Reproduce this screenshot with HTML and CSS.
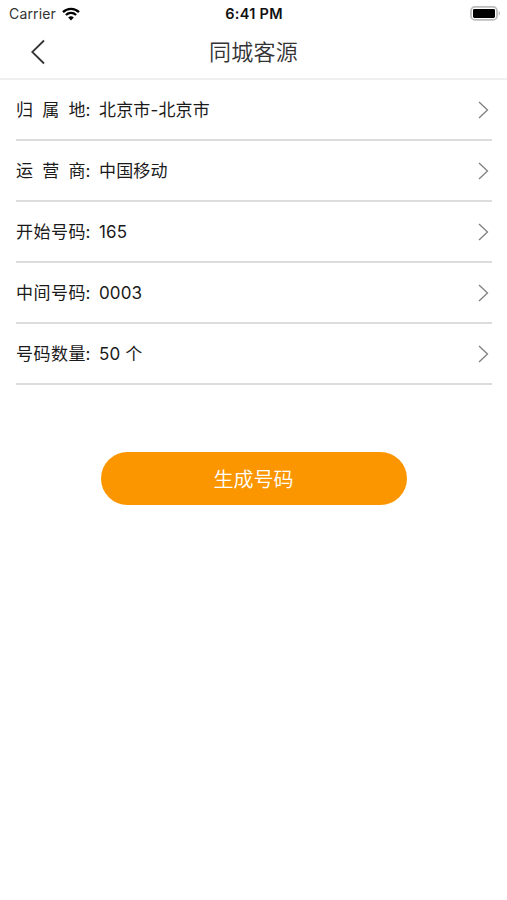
FILE: index.html
```html
<!DOCTYPE html>
<html lang="zh-CN">
<head>
    <meta charset="UTF-8">
    <meta name="viewport" content="width=device-width, initial-scale=1.0">
    <title>同城客源</title>
    <link rel="stylesheet" href="styles.css">
</head>
<body>
    <div class="status-bar">
        <div class="carrier">
            <span>Carrier</span>
            <svg class="wifi" width="18" height="14" viewBox="0 0 18 14">
                <path d="M1 5.1a11.5 11.5 0 0 1 16 0M3.9 8a7.3 7.3 0 0 1 10.2 0" fill="none" stroke="#000" stroke-width="2.3"/>
                <path d="M9 13.4L6.2 10.6a4 4 0 0 1 5.6 0z"/>
            </svg>
        </div>
        <div class="time">6:41 PM</div>
        <svg class="battery" width="31" height="15" viewBox="0 0 31 15">
            <rect x="1" y="0.9" width="26" height="13" rx="4" fill="#fff" stroke="#bcbcbc" stroke-width="1.8"/>
            <rect x="3" y="2.9" width="22" height="9" rx="1.4"/>
            <path d="M28.6 5.2c1.9.6 1.9 3.8 0 4.4z" fill="#bcbcbc"/>
        </svg>
    </div>

    <header class="nav-bar">
        <a class="back" href="#" aria-label="返回">
            <svg width="14" height="26" viewBox="0 0 14 26">
                <path d="M13 1.5L1.2 13 13 24.5" fill="none" stroke="#333" stroke-width="1.8"/>
            </svg>
        </a>
        <h1 class="title">同城客源</h1>
    </header>

    <main>
        <ul class="list">
            <li class="row">
                <span class="label"><span class="spread"><i>归</i><i>属</i><i>地</i></span>:</span>
                <span class="value">北京市-北京市</span>
                <svg class="arrow" viewBox="0 0 11 18"><path d="M1 1l8.5 8L1 17"/></svg>
            </li>
            <li class="row">
                <span class="label"><span class="spread"><i>运</i><i>营</i><i>商</i></span>:</span>
                <span class="value">中国移动</span>
                <svg class="arrow" viewBox="0 0 11 18"><path d="M1 1l8.5 8L1 17"/></svg>
            </li>
            <li class="row">
                <span class="label"><span class="spread"><i>开</i><i>始</i><i>号</i><i>码</i></span>:</span>
                <span class="value">165</span>
                <svg class="arrow" viewBox="0 0 11 18"><path d="M1 1l8.5 8L1 17"/></svg>
            </li>
            <li class="row">
                <span class="label"><span class="spread"><i>中</i><i>间</i><i>号</i><i>码</i></span>:</span>
                <span class="value">0003</span>
                <svg class="arrow" viewBox="0 0 11 18"><path d="M1 1l8.5 8L1 17"/></svg>
            </li>
            <li class="row">
                <span class="label"><span class="spread"><i>号</i><i>码</i><i>数</i><i>量</i></span>:</span>
                <span class="value">50 个</span>
                <svg class="arrow" viewBox="0 0 11 18"><path d="M1 1l8.5 8L1 17"/></svg>
            </li>
        </ul>
        <button class="submit" type="button">生成号码</button>
    </main>
</body>
</html>
```
FILE: styles.css
```css
:root {
    --primary-color: #fb9600;
    --text-color: #1a1a1a;
    --line-color: #dcdcdc;
}

* {
    box-sizing: border-box;
}

body {
    margin: 0;
    min-height: 100vh;
    background-color: #fff;
    color: var(--text-color);
    font-family: Inter, "Noto Sans CJK SC", sans-serif;
}

.status-bar {
    display: grid;
    grid-template-columns: 1fr auto 1fr;
    align-items: center;
    height: 27px;
    padding: 0 6px 0 9px;
    font-size: 14px;
}

.carrier {
    display: flex;
    align-items: center;
    gap: 6px;
    color: #333;
    letter-spacing: 0.15px;
}

.time {
    margin-right: 2px;
    color: #111;
    font-size: 14.5px;
    font-weight: 600;
    letter-spacing: 0.3px;
}

.battery {
    justify-self: end;
}

.nav-bar {
    display: grid;
    grid-template-columns: 60px 1fr 60px;
    align-items: center;
    height: 53px;
    padding-bottom: 2px;
    border-bottom: 2px solid #efefef;
}

.back {
    display: flex;
    padding-left: 31px;
}

.title {
    margin: 0;
    color: #333;
    font-size: 22px;
    font-weight: 350;
    letter-spacing: 0.2px;
    line-height: 30px;
    text-align: center;
}

.list {
    margin: 0;
    padding: 0 15px 0 16px;
    list-style: none;
}

.row {
    display: flex;
    align-items: center;
    height: 61.1px;
    padding-right: 3px;
    border-bottom: 2px solid var(--line-color);
    font-size: 17px;
    line-height: 25px;
}

.label {
    display: flex;
    align-items: baseline;
    width: 83px;
    padding-top: 1px;
}

/* labels of three and four characters share one width */
.spread {
    display: flex;
    justify-content: space-between;
    width: 69.5px;
}

.spread i {
    font-style: normal;
}

.value {
    flex: 1;
    padding-top: 1px;
    letter-spacing: 0.15px;
}

.arrow {
    width: 11px;
    height: 18px;
    fill: none;
    stroke: #808080;
    stroke-width: 1.3;
}

.submit {
    display: block;
    width: 306px;
    height: 53px;
    margin: 67px auto 0;
    padding: 0;
    border: 0;
    border-radius: 27px;
    background-color: var(--primary-color);
    color: #fff;
    font-family: inherit;
    font-size: 20px;
    font-weight: 350;
}
```
